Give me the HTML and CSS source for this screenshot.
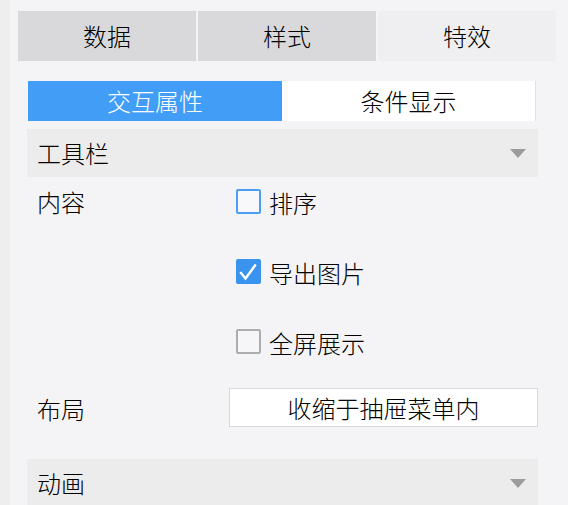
FILE: index.html
```html
<!DOCTYPE html>
<html lang="zh-CN">
<head>
<meta charset="utf-8">
<link rel="stylesheet" href="styles.css">
</head>
<body>
<div class="app">
  <div class="gutter"></div>
  <div class="panel">
    <div class="tabs">
      <div class="tab">数据</div>
      <div class="tab">样式</div>
      <div class="tab active">特效</div>
    </div>
    <div class="content">
      <div class="subtabs">
        <div class="subtab on">交互属性</div>
        <div class="subtab">条件显示</div>
      </div>
      <div class="section-head">
        <span>工具栏</span>
        <span class="caret"></span>
      </div>
      <div class="form">
        <div class="label first">内容</div>
        <div class="options">
          <label class="opt"><span class="box focus"></span><span>排序</span></label>
          <label class="opt"><span class="box checked"><svg viewBox="0 0 25 25" width="25" height="25"><polyline points="5,14 9.5,19.5 19,6.5" fill="none" stroke="#fff" stroke-width="2.4" stroke-linecap="square"/></svg></span><span>导出图片</span></label>
          <label class="opt"><span class="box"></span><span>全屏展示</span></label>
        </div>
        <div class="label mid">布局</div>
        <div class="select">收缩于抽屉菜单内</div>
      </div>
      <div class="section-head anim">
        <span>动画</span>
        <span class="caret"></span>
      </div>
    </div>
  </div>
</div>
</body>
</html>
```
FILE: styles.css
```css
* { box-sizing: border-box; }
html, body { margin: 0; padding: 0; }
body {
  background: #f4f4f6;
  font-family: "Noto Sans CJK SC", "Noto Sans", sans-serif;
  font-size: 24px;
  font-weight: 300;
  color: #000;
  height: 505px;
  overflow: hidden;
}
.app { display: flex; height: 505px; }
.gutter { width: 10px; background: #eeeeee; flex: none; }
.panel { flex: 1; padding-left: 8px; padding-top: 11px; }
.tabs { display: flex; gap: 2px; width: 538px; }
.tab {
  width: 178px; height: 50px;
  background: #d9d9dc;
  display: flex; align-items: center; justify-content: center;
  line-height: 1;
}
.tab.active { background: #efeff1; }
.content { width: 511px; margin-left: 9px; }
.subtabs { display: flex; margin-top: 20px; height: 40px; padding-left: 1px; }
.subtab {
  flex: 1; display: flex; align-items: center; justify-content: center;
  background: #fff; line-height: 1;
}
.subtab.on { background: #429df7; color: #fff; flex: 0 0 254px; }
.subtab:last-child { border-right: 1px solid #e2e2e2; margin-right: 2px; }
.section-head {
  margin-top: 8px; height: 48px;
  background: #ececed;
  display: flex; align-items: center; justify-content: space-between;
  padding: 0 12px 0 10px; line-height: 1;
}
.section-head.anim { margin-top: 32px; }
.caret {
  width: 0; height: 0;
  border-left: 8px solid transparent;
  border-right: 8px solid transparent;
  border-top: 9px solid #9c9c9c;
}
.form {
  display: grid;
  grid-template-columns: 202px 1fr;
  row-gap: 34px;
}
.label { padding-left: 10px; line-height: 25px; }
.label.first { padding-top: 12px; }
.label.mid { align-self: center; padding-top: 1px; }
.options {
  display: flex; flex-direction: column; gap: 45px;
  padding-top: 12px; padding-left: 7px;
}
.opt { display: flex; align-items: center; height: 25px; gap: 8px; line-height: 1; }
.opt span:last-child { padding-top: 2px; }
.box {
  width: 25px; height: 25px; flex: none;
  border: 2px solid #adadad; border-radius: 2px;
  background: #f6f6f8;
}
.box.focus { border-color: #4b9ef3; background: #f8f8fa; }
.box.checked { border: none; background: #3a93ee; }
.box.checked svg { display: block; }
.select {
  height: 39px; background: #fff;
  border: 1px solid #d9d9d9;
  display: flex; align-items: center; justify-content: center;
  line-height: 1; padding-top: 1px;
}
```
